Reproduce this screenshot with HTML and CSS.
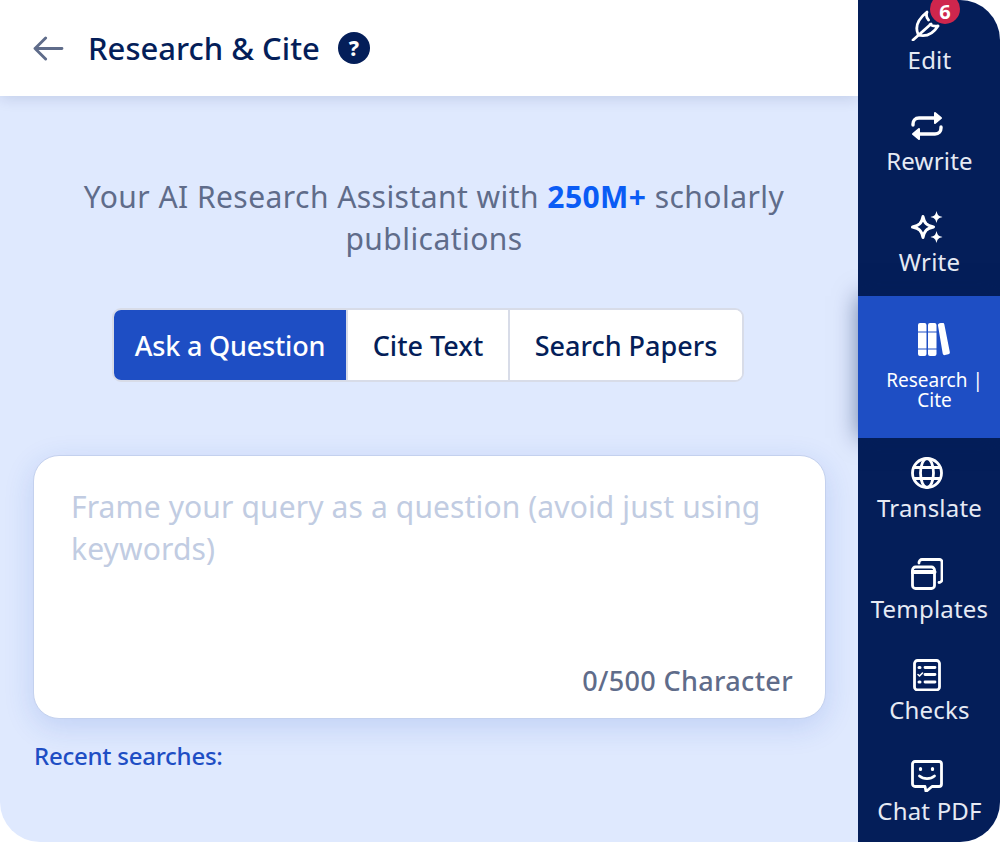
FILE: index.html
```html
<!DOCTYPE html>
<html lang="en">
<head>
<meta charset="utf-8">
<title>Research &amp; Cite</title>
<link rel="stylesheet" href="styles.css">
</head>
<body>
<div class="app">
  <main class="main">
    <header class="header">
      <svg class="back" viewBox="0 0 32 26" fill="none" stroke="#5f6c8a" stroke-width="3" stroke-linecap="round" stroke-linejoin="round"><path d="M2 13h28M13 2 2 13l11 11"/></svg>
      <h1 class="title">Research &amp; Cite</h1>
      <span class="help">?</span>
    </header>
    <section class="content">
      <p class="lead">Your AI Research Assistant with <b>250M+</b> scholarly publications</p>
      <div class="tabs">
        <button class="tab tab-ask is-on">Ask a Question</button>
        <button class="tab tab-cite">Cite Text</button>
        <button class="tab tab-search">Search Papers</button>
      </div>
      <div class="card">
        <p class="placeholder">Frame your query as a question (avoid just using keywords)</p>
        <p class="count">0/500 Character</p>
      </div>
      <p class="recent">Recent searches:</p>
    </section>
  </main>
  <nav class="side">
    <a class="item">
      <span class="badge">6</span>
      <svg class="ico" viewBox="0 0 32 32" fill="none" stroke="#fff" stroke-width="2.800" stroke-linecap="round" stroke-linejoin="round"><path d="M2 31 20 15M7 25C4 18 6 11 16 3c-1 3-.5 6 1.500 8M7 26c8 2 15-1 20-9-3 .5-6 0-8-1.500"/></svg>
      <span class="label">Edit</span>
    </a>
    <a class="item">
      <svg class="ico" viewBox="0 0 32 32" fill="none" stroke="#fff" stroke-width="3.400" stroke-linecap="round" stroke-linejoin="round"><path d="M2 15v-1c0-3 2-6 6-6h17"/><path d="M30 17v1c0 3-2 6-6 6H7"/><path d="M24 3l6 5-6 5z" fill="#fff" stroke-width="2"/><path d="M8 19l-6 5 6 5z" fill="#fff" stroke-width="2"/></svg>
      <span class="label">Rewrite</span>
    </a>
    <a class="item">
      <svg class="ico" viewBox="0 0 32 32" fill="none" stroke="#fff" stroke-width="3" stroke-linejoin="round"><path d="M12 5.500c1.500 7 3.500 9 10.500 10.500-7 1.500-9 3.500-10.500 10.500C10.500 19.500 8.500 17.500 1.500 16 8.500 14.500 10.500 12.500 12 5.500Z"/><path d="M25.500 0c1 4 2 5 6 6-4 1-5 2-6 6-1-4-2-5-6-6 4-1 5-2 6-6ZM25.500 20c1 4 2 5 6 6-4 1-5 2-6 6-1-4-2-5-6-6 4-1 5-2 6-6Z" fill="#fff" stroke="none"/></svg>
      <span class="label">Write</span>
    </a>
    <a class="item item-on">
      <svg class="ico-books" viewBox="0 0 32 33" fill="#fff"><path d="M0 2a2 2 0 0 1 2-2h4.500a2 2 0 0 1 2 2v6.500H0zM0 9.500h8.500v16H0zM0 26.500h8.500V31a2 2 0 0 1-2 2H2a2 2 0 0 1-2-2zM10 2a2 2 0 0 1 2-2h4.500a2 2 0 0 1 2 2v6.500H10zM10 9.500h8.500v16H10zM10 26.500h8.500V31a2 2 0 0 1-2 2H12a2 2 0 0 1-2-2z"/><path d="M20 2.500a2 2 0 0 1 1.500-2.300l2.500-.4a2 2 0 0 1 2.300 1.500L31.800 29a2 2 0 0 1-1.500 2.300l-3.300.8a2 2 0 0 1-2.300-1.500z"/></svg>
      <span class="label-on">Research |<br>Cite</span>
    </a>
    <a class="item item-after">
      <svg class="ico" viewBox="0 0 32 32" fill="none" stroke="#fff" stroke-width="2.800"><circle cx="16" cy="16" r="14.500"/><ellipse cx="16" cy="16" rx="6.500" ry="14.500"/><path d="M3 10.500h26M3 21.500h26"/></svg>
      <span class="label">Translate</span>
    </a>
    <a class="item">
      <svg class="ico" viewBox="0 0 32 32" fill="none" stroke="#fff" stroke-width="2.800" stroke-linejoin="round" stroke-linecap="round"><rect x="1.500" y="9" width="22" height="21.500" rx="3"/><path d="M1.500 14h22" stroke-width="4"/><path d="M8 5V4.500a3 3 0 0 1 3-3h17.500a2.500 2.500 0 0 1 2.500 2.500v17.500a3 3 0 0 1-3 3"/></svg>
      <span class="label">Templates</span>
    </a>
    <a class="item">
      <svg class="ico" viewBox="0 0 32 32" fill="none" stroke="#fff" stroke-width="2.800" stroke-linecap="round" stroke-linejoin="round"><rect x="3.500" y="1.500" width="25" height="29.500" rx="3"/><path d="M14 8.500h10M14 15.500h10M14 23h10"/><path d="M8 8.500h1M8 23h1" stroke-width="3"/><path d="m7 15.500 1.500 1.500 3-3" stroke-width="1.600"/></svg>
      <span class="label">Checks</span>
    </a>
    <a class="item">
      <svg class="ico" viewBox="0 0 32 32" fill="none" stroke="#fff" stroke-width="2.800" stroke-linejoin="round" stroke-linecap="round"><path d="M4 1.500h24A2.500 2.500 0 0 1 30.500 4v20a2.500 2.500 0 0 1-2.500 2.500h-7l-6 5-1-5H4A2.500 2.500 0 0 1 1.500 24V4A2.500 2.500 0 0 1 4 1.500Z"/><path d="M9.500 8.500v1M21.500 8.500v1" stroke-width="3.200"/><path d="M8.500 16c4 3.600 11 3.600 15 0"/></svg>
      <span class="label">Chat PDF</span>
    </a>
  </nav>
</div>
</body>
</html>
```
FILE: styles.css
```css
* { box-sizing: border-box; }
html, body { margin: 0; padding: 0; background: #fff; }
body { font-family: "Noto Sans", Roboto, sans-serif; }
.app {
  width: 1000px;
  height: 842px;
  display: flex;
  overflow: hidden;
  border-radius: 0 40px 40px 40px;
  background: #dfe9fe;
}
.main { width: 858px; display: flex; flex-direction: column; }
.header {
  height: 96px;
  background: #fff;
  display: flex;
  align-items: center;
  padding-left: 33px;
  box-shadow: 0 2px 14px rgba(4, 30, 89, 0.14);
  position: relative;
}
.back { width: 31px; height: 25px; margin-right: 25px; }
.title {
  margin: 0 18px 0 -1px;
  font-size: 31px;
  line-height: 40px;
  font-weight: 500;
  color: #041e59;
  white-space: nowrap;
}
.help {
  width: 32px;
  height: 32px;
  border-radius: 50%;
  background: #041e59;
  color: #fff;
  font-size: 21px;
  font-weight: 800;
  display: flex;
  align-items: center;
  justify-content: center;
}
.content { flex: 1; display: flex; flex-direction: column; padding: 80px 33px 0; }
.lead {
  margin: 0 0 0 31px;
  width: 740px;
  text-align: center;
  font-size: 30px;
  line-height: 42px;
  letter-spacing: 0.45px;
  color: #5f6c8a;
}
.lead b { color: #0a5cf5; font-weight: 700; }
.tabs {
  display: flex;
  align-self: flex-start;
  margin: 48px 0 0 79px;
  height: 74px;
  width: 632px;
  border: 2px solid #d8dce8;
  border-radius: 9px;
  overflow: hidden;
  background: #fff;
}
.tab {
  border: 0;
  padding: 0;
  background: #fff;
  color: #041e59;
  font: 500 27px/1 "Noto Sans", Roboto, sans-serif;
  border-right: 2px solid #d8dce8;
}
.tab-ask { width: 234px; letter-spacing: -0.2px; }
.tab-cite { width: 162px; }
.tab-search { flex: 1; border-right: 0; }
.tab.is-on { background: #1e4ec4; color: #fff; }
.card {
  margin-top: 73px;
  height: 264px;
  width: 793px;
  background: #fff;
  border: 1px solid #c4d1ee;
  border-radius: 26px;
  padding: 30px 32px 19px 37px;
  display: flex;
  flex-direction: column;
  justify-content: space-between;
  box-shadow: 0 8px 30px rgba(30, 78, 196, 0.16);
}
.placeholder { margin: 0; font-size: 30px; line-height: 42px; letter-spacing: 0.12px; color: #c1cce2; }
.count { margin: 0; text-align: right; font-size: 27px; line-height: 36px; font-weight: 500; letter-spacing: 0.35px; color: #5f6c8a; }
.recent { margin: 21px 0 0 1px; font-size: 24px; line-height: 32px; font-weight: 500; letter-spacing: -0.25px; color: #1e4ec4; }
.side {
  width: 142px;
  background: #041e59;
  display: flex;
  flex-direction: column;
  gap: 10px;
  padding-top: 3px;
  position: relative;
}
.item {
  height: 91px;
  display: flex;
  flex-direction: column;
  align-items: center;
  padding-top: 6px;
  position: relative;
  flex: none;
}
.ico { width: 32px; height: 32px; margin-left: -5px; flex: none; }
.label {
  margin-top: 3px;
  padding-left: 1px;
  font-size: 24px;
  line-height: 32px;
  letter-spacing: 0.2px;
  color: #e6eaf4;
  white-space: nowrap;
}
.item-on {
  height: 142px;
  margin-top: -10px;
  background: #1e4ec4;
  padding-top: 27px;
  box-shadow: 0 0 22px rgba(4, 30, 89, 0.5);
  z-index: 1;
}
.ico-books { width: 32px; height: 33px; margin-left: 10px; flex: none; }
.label-on {
  margin-top: 14px;
  padding-left: 11px;
  font-size: 19px;
  line-height: 20px;
  color: #fff;
  text-align: center;
}
.item-after { margin-top: 3px; }
.badge {
  position: absolute;
  left: 72px;
  top: -9px;
  width: 30px;
  height: 30px;
  padding-top: 5px;
  border-radius: 50%;
  background: #cf264d;
  color: #fff;
  font-size: 20px;
  line-height: 1;
  font-weight: 700;
  display: flex;
  align-items: center;
  justify-content: center;
}
```
